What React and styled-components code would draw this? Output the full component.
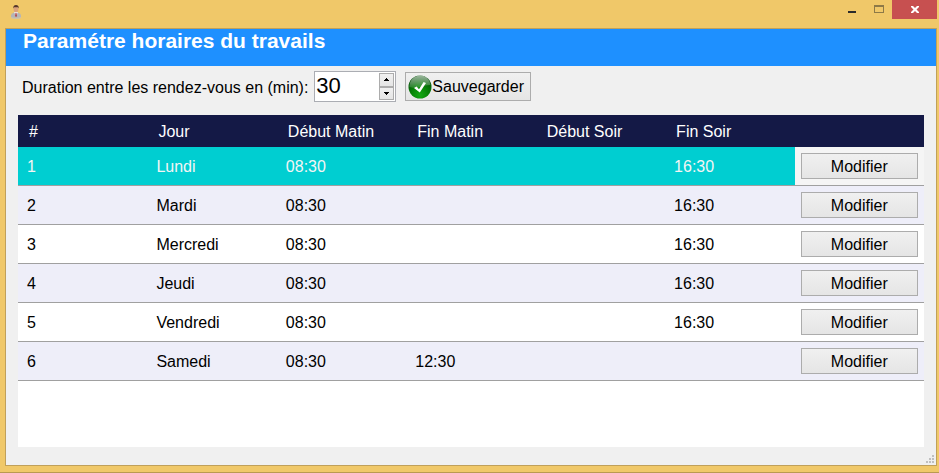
import React, { useState } from "react";
import styled, { createGlobalStyle } from "styled-components";

const GlobalStyle = createGlobalStyle`
  * { box-sizing: border-box; }
  body { margin: 0; }
  body, button, input {
    font-family: "Liberation Sans", Arial, sans-serif;
    font-size: 16px;
    color: #000;
  }
`;

const Window = styled.div`
  min-height: 100vh;
  display: flex;
  flex-direction: column;
  padding: 0 2px 6px 5px;
  background: #f0c869;
  border-bottom: 1px solid #b99a50;
`;

const TitleBar = styled.header`
  height: 28px;
  flex: none;
  display: flex;
  justify-content: space-between;
  align-items: flex-start;
`;

const AppIcon = styled.svg`
  width: 12px;
  height: 16px;
  margin: 4px 0 0 5px;
`;

const WindowControls = styled.div`
  display: flex;
`;

const WindowButton = styled.button`
  width: ${(p) => (p.$close ? 45 : 27)}px;
  height: 19px;
  padding: 0;
  border: 0;
  background: ${(p) => (p.$close ? "#c75050" : "transparent")};

  svg { display: block; width: 100%; height: 100%; }
`;

const Client = styled.main`
  flex: 1;
  display: flex;
  flex-direction: column;
  background: #f0f0f0;
  border: 1px solid #c0a05a;
`;

const Banner = styled.h1`
  height: 37px;
  margin: 0;
  padding-left: 17px;
  background: #1e90ff;
  color: #fff;
  font-size: 21px;
  line-height: 24px;
  font-weight: bold;
`;

const Toolbar = styled.form`
  display: flex;
  align-items: center;
  height: 49px;
  padding: 0 16px 8px;
`;

const FieldLabel = styled.label`
  padding-top: 2px;
`;

const NumberBox = styled.div`
  display: flex;
  width: 82px;
  height: 31px;
  margin: 0 9px 0 6px;
  padding: 1px;
  background: #fff;
  border: 1px solid #abadb3;
`;

const NumberInput = styled.input`
  flex: 1;
  min-width: 0;
  padding: 0 0 1px;
  border: 0;
  outline: 0;
  background: transparent;
  font-size: 22px;
  line-height: 24px;
  appearance: textfield;

  &::-webkit-inner-spin-button { appearance: none; }
`;

const Spinner = styled.div`
  display: flex;
  flex-direction: column;
  width: 15px;
`;

const SpinButton = styled.button`
  flex: 1;
  display: flex;
  align-items: center;
  justify-content: center;
  padding: 0;
  border: 1px solid #acacac;
  background: linear-gradient(#f0f0f0, #e5e5e5);

  svg { width: 5px; height: 3px; }
`;

const PushButton = styled.button`
  display: flex;
  align-items: center;
  justify-content: center;
  width: 100%;
  height: 26px;
  padding: 1px 0 0;
  border: 1px solid #acacac;
  background: linear-gradient(#f0f0f0, #e5e5e5);
  line-height: 20px;
`;

const SaveButton = styled(PushButton)`
  justify-content: flex-start;
  width: 126px;
  height: 29px;
  padding: 0 0 0 2px;

  svg { flex: none; width: 24px; height: 24px; }
`;

const GridArea = styled.section`
  flex: 1;
  margin: 0 12px 18px;
  background: #fff;
`;

const Table = styled.table`
  width: 100%;
  table-layout: fixed;
  border-collapse: separate;
  border-spacing: 0;
`;

const HeadCell = styled.th`
  height: 32px;
  padding: 2px 0 0 11px;
  background: #141946;
  color: #fff;
  font-weight: normal;
  text-align: left;
`;

const Row = styled.tr`
  background: ${(p) => (p.$striped ? "#eeeef9" : "#fff")};
`;

const Cell = styled.td`
  height: 39px;
  padding: 2px 0 0 9px;
  border-bottom: 1px solid #a0a0a0;
  background: ${(p) => (p.$selected ? "#00ced1" : "transparent")};
  color: ${(p) => (p.$selected ? "#f5f5f5" : "#000")};
`;

const ActionCell = styled(Cell)`
  padding: 0 6px;
  background: ${(p) => (p.$tinted ? "#f5f5f5" : "transparent")};
`;

const GripRow = styled.footer`
  display: flex;
  justify-content: flex-end;
  height: 10px;
  margin-top: -10px;
  padding-right: 2px;

  svg { width: 8px; height: 8px; }
`;

const columns = ["#", "Jour", "Début Matin", "Fin Matin", "Début Soir", "Fin Soir"];
const schedule = [
  ["1", "Lundi", "08:30", "", "", "16:30"],
  ["2", "Mardi", "08:30", "", "", "16:30"],
  ["3", "Mercredi", "08:30", "", "", "16:30"],
  ["4", "Jeudi", "08:30", "", "", "16:30"],
  ["5", "Vendredi", "08:30", "", "", "16:30"],
  ["6", "Samedi", "08:30", "12:30", "", ""],
];

function PersonIcon() {
  return (
    <AppIcon viewBox="0 0 12 16" aria-hidden="true">
      <ellipse cx="6" cy="13.5" rx="5" ry="1.5" fill="#d0c3a4" />
      <path d="M1 13V11.500Q1 9.500 4 8.500h4q3 1 3 3V13Q6 14.500 1 13Z" fill="#b4b5b8" />
      <path d="M4 8l2 4 2-4Z" fill="#eee9ef" />
      <path d="M5.500 9h1l.6 3L6 13l-1-1Z" fill="#b04a50" />
      <ellipse cx="6" cy="5" rx="2.400" ry="3.200" fill="#dba37c" />
      <path d="M3.200 4.500Q3 1 6 1t2.800 3.500L8 3.200H4Z" fill="#54372b" />
    </AppIcon>
  );
}

function CheckIcon() {
  return (
    <svg viewBox="0 0 24 24" aria-hidden="true">
      <defs>
        <radialGradient id="ball" cx="50%" cy="85%" r="75%">
          <stop offset="0" stopColor="#12a812" />
          <stop offset="0.5" stopColor="#078307" />
          <stop offset="1" stopColor="#06500b" />
        </radialGradient>
        <linearGradient id="shine" x1="0" y1="0" x2="0" y2="1">
          <stop offset="0" stopColor="#fff" stopOpacity="0.6" />
          <stop offset="1" stopColor="#fff" stopOpacity="0.12" />
        </linearGradient>
      </defs>
      <circle cx="12" cy="12" r="11.500" fill="url(#ball)" />
      <path d="M1.500 12A10.500 10.500 0 0 1 22.500 10Q16 10 12 12T1.500 12Z" fill="url(#shine)" />
      <path d="M6 13l2.600-1.500 2.400 2.700 4.600-7.200 2.400 1-6.200 9.600Z" fill="#fff" />
    </svg>
  );
}

export default function App() {
  const [minutes, setMinutes] = useState(30);
  const step = (amount) => setMinutes((m) => Math.max(0, Number(m) + amount));

  return (
    <>
      <GlobalStyle />
      <Window>
        <TitleBar>
          <PersonIcon />
          <WindowControls>
            <WindowButton type="button" aria-label="Réduire">
              <svg viewBox="0 0 27 19"><path d="M10 11h8v2h-8z" fill="#2b2b2b" /></svg>
            </WindowButton>
            <WindowButton type="button" aria-label="Agrandir">
              <svg viewBox="0 0 27 19"><path d="M9 5h10v8H9zM10 7v5h8V7z" fill="#8d7947" fillRule="evenodd" /></svg>
            </WindowButton>
            <WindowButton type="button" aria-label="Fermer" $close>
              <svg viewBox="0 0 45 19"><path d="M19 6h2l2 2 2-2h2v1l-2.500 2.500L27 12v1h-2l-2-2-2 2h-2v-1l2.500-2.500L19 7z" fill="#fff" /></svg>
            </WindowButton>
          </WindowControls>
        </TitleBar>
        <Client>
          <Banner>Paramétre horaires du travails</Banner>
          <Toolbar onSubmit={(e) => e.preventDefault()}>
            <FieldLabel htmlFor="duration">Duration entre les rendez-vous en (min):</FieldLabel>
            <NumberBox>
              <NumberInput
                id="duration"
                type="number"
                value={minutes}
                onChange={(e) => setMinutes(e.target.value)}
              />
              <Spinner>
                <SpinButton type="button" aria-label="Augmenter" onClick={() => step(1)}>
                  <svg viewBox="0 0 5 3"><path d="M2 0h1v1h1v1h1v1H0V2h1V1h1z" /></svg>
                </SpinButton>
                <SpinButton type="button" aria-label="Diminuer" onClick={() => step(-1)}>
                  <svg viewBox="0 0 5 3"><path d="M0 0h5v1H4v1H3v1H2V2H1V1H0z" /></svg>
                </SpinButton>
              </Spinner>
            </NumberBox>
            <SaveButton type="submit"><CheckIcon />Sauvegarder</SaveButton>
          </Toolbar>
          <GridArea>
            <Table>
              <thead>
                <tr>
                  {columns.map((name) => <HeadCell key={name} scope="col">{name}</HeadCell>)}
                  <HeadCell scope="col" aria-label="Action" />
                </tr>
              </thead>
              <tbody>
                {schedule.map((day, i) => (
                  <Row key={day[0]} $striped={i % 2 === 1}>
                    {day.map((value, c) => <Cell key={columns[c]} $selected={i === 0}>{value}</Cell>)}
                    <ActionCell $tinted={i === 0}>
                      <PushButton type="button">Modifier</PushButton>
                    </ActionCell>
                  </Row>
                ))}
              </tbody>
            </Table>
          </GridArea>
          <GripRow>
            <svg viewBox="0 0 8 8" aria-hidden="true">
              <path d="M6 0h2v2H6zM3 3h2v2H3zM6 3h2v2H6zM0 6h2v2H0zM3 6h2v2H3zM6 6h2v2H6z" fill="#bfbfbf" />
            </svg>
          </GripRow>
        </Client>
      </Window>
    </>
  );
}
